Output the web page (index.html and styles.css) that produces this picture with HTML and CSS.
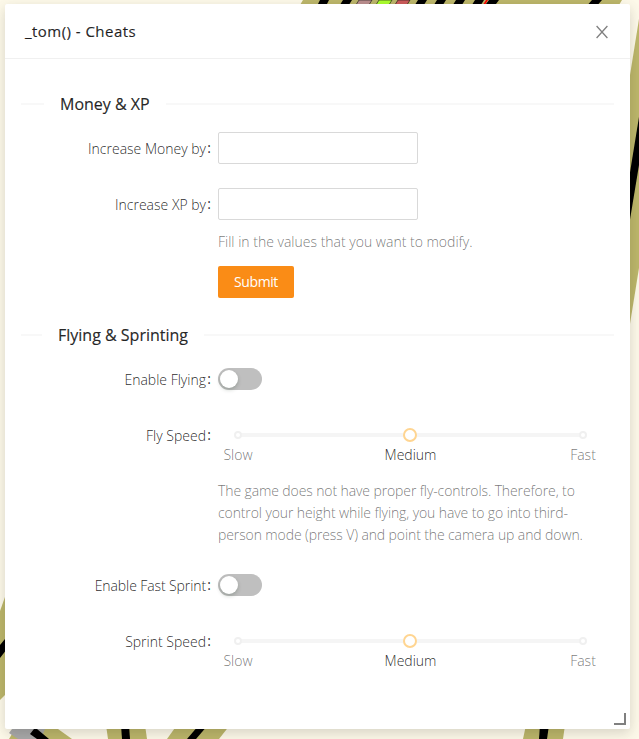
FILE: index.html
```html
<!DOCTYPE html>
<html lang="en">
<head>
<meta charset="utf-8">
<title>_tom() - Cheats</title>
<link rel="stylesheet" href="styles.css">
</head>
<body>
<svg class="scene" width="639" height="739" viewBox="0 0 639 739" aria-hidden="true">
  <g fill="#bdb76b">
    <path d="M303 0H622L610 20H291Z"/>
    <path d="M639 19L600 262V510L639 268Z"/>
    <path d="M0 611L5 597L40 590V660L0 700Z"/>
    <path d="M15 729H58L72 739H9Z"/>
    <path d="M106 725H145L147 739H108Z"/>
    <path d="M177 725H230L219 739H167Z"/>
    <path d="M526 725H565L563 739H523Z"/>
  </g>
  <g fill="#000">
    <path d="M320 0H329L325 8H316Z"/>
    <path d="M343 0H352L347 8H338Z"/>
    <path d="M418 0H427L422 8H413Z"/>
    <path d="M437 0H446L441 8H432Z"/>
    <path d="M456 0H465L460 8H451Z"/>
    <path d="M475 0H484L479 8H470Z"/>
    <path d="M489 0H499L493 8H483Z"/>
    <path d="M592 0H602L595 8H585Z"/>
    <path d="M639 117L620 234V280L639 165Z"/>
    <path d="M0 645L10 633V645L0 658Z"/>
    <path d="M121 725H129L130 739H122Z"/>
    <path d="M199 725H208L196 739H187Z"/>
    <path d="M540 725H549L547 739H539Z"/>
  </g>
  <path d="M12 729H45L41 739H18L9 733Z" fill="#a9a9a9"/>
  <path d="M34 729H37L49 739H37L30 734Z"/>
  <g stroke="#111" stroke-width=".6">
    <path d="M359 0H372L367 8H354Z" fill="#bc8f8f"/>
    <path d="M379 0H392L387 8H374Z" fill="#adff2f"/>
    <path d="M398 0H410L405 8H393Z" fill="#cd5c5c"/>
  </g>
  <path d="M486 0H488L483 8H481Z" fill="#f00"/>
</svg>

<main class="window">
  <header class="window-header">
    <h1 class="window-title">_tom() - Cheats</h1>
    <button class="close" aria-label="Close">
      <svg width="14" height="14" viewBox="0 0 14 14"><path d="M1.6 1L12.4 13M12.4 1L1.6 13"/></svg>
    </button>
  </header>
  <div class="window-body">
    <h2 class="divider money"><span>Money &amp; XP</span></h2>
    <div class="row">
      <label class="label" for="money">Increase Money by<i>:</i></label>
      <input class="input" id="money">
    </div>
    <div class="row xp">
      <label class="label" for="xp">Increase XP by<i>:</i></label>
      <div class="control">
        <input class="input" id="xp">
        <p class="hint fill">Fill in the values that you want to modify.</p>
        <button class="submit">Submit</button>
      </div>
    </div>
    <h2 class="divider flying"><span>Flying &amp; Sprinting</span></h2>
    <div class="row">
      <span class="label">Enable Flying<i>:</i></span>
      <button class="switch" role="switch" aria-checked="false" aria-label="Enable Flying"></button>
    </div>
    <div class="row fly">
      <span class="label">Fly Speed<i>:</i></span>
      <div class="control">
        <div class="slider"><span class="dot"></span><span class="handle"></span><span class="dot"></span></div>
        <div class="marks"><span>Slow</span><span class="active">Medium</span><span>Fast</span></div>
        <p class="hint">The game does not have proper fly-controls. Therefore, to<br>control your height while flying, you have to go into third-<br>person mode (press V) and point the camera up and down.</p>
      </div>
    </div>
    <div class="row">
      <span class="label tight">Enable Fast Sprint<i>:</i></span>
      <button class="switch" role="switch" aria-checked="false" aria-label="Enable Fast Sprint"></button>
    </div>
    <div class="row">
      <span class="label">Sprint Speed<i>:</i></span>
      <div class="control">
        <div class="slider"><span class="dot"></span><span class="handle"></span><span class="dot"></span></div>
        <div class="marks"><span>Slow</span><span class="active">Medium</span><span>Fast</span></div>
      </div>
    </div>
  </div>
  <span class="resize"></span>
</main>
</body>
</html>
```
FILE: styles.css
```css
* { box-sizing: border-box; }
body {
  margin: 0;
  padding: 4px 9px 10px 5px;
  height: 739px;
  overflow: hidden;
  background: #fdf9e9;
  font: 300 14px/22px "Open Sans", "Noto Sans", sans-serif;
  color: rgba(0, 0, 0, .85);
}
button { padding: 0; border: 0; font: inherit; }
h1, h2, p { margin: 0; }
.scene { position: absolute; left: 0; top: 0; }
.window {
  position: relative;
  height: 725px;
  background: #fff;
  border-radius: 2px;
  box-shadow: 0 4px 12px rgba(0, 0, 0, .12), 0 4px 24px rgba(0, 0, 0, .04);
}
.window-header {
  display: flex;
  align-items: center;
  justify-content: space-between;
  height: 55px;
  padding: 0 21px 0 20px;
  border-bottom: 1px solid #f0f0f0;
}
.window-title { font-size: 15px; font-weight: 500; letter-spacing: .46px; -webkit-text-stroke: .2px; }
.close { display: flex; margin-top: 2px; background: none; }
.close svg { fill: none; stroke: #808080; stroke-width: 1.3; }
.window-body { padding: 32px 16px 0; }
.divider {
  display: flex;
  align-items: center;
  height: 25px;
  font-size: 16px;
  font-weight: 500;
  white-space: nowrap;
  -webkit-text-stroke: .2px;
}
.divider::before, .divider::after { content: ""; height: 2px; background: #f8f8f8; }
.divider::before { width: 23px; }
.divider::after { flex: 1; }
.divider span { padding: 0 16px; }
.money { margin-bottom: 16px; }
.flying { margin-bottom: 16px; }
.flying::before { width: 21px; }
.row { display: flex; align-items: flex-start; min-height: 32px; margin-bottom: 24px; }
.label { width: 197px; padding-right: 7px; line-height: 33px; height: 32px; text-align: right; white-space: nowrap; }
.label i {
  display: inline-block;
  width: 4px;
  margin-left: 1px;
  font-style: normal;
  font-weight: 500;
  letter-spacing: 0;
  transform: translateY(-1px);
}
.tight { letter-spacing: -.1px; }
.control { flex: 1; }
.input {
  display: block;
  width: 200px;
  height: 32px;
  border: 1px solid #d9d9d9;
  border-radius: 2px;
  background: #fff;
}
.hint { color: rgba(0, 0, 0, .55); white-space: nowrap; }
.fill { margin: 11px 0 13px; }
.submit {
  display: block;
  width: 76px;
  height: 32px;
  border-radius: 2px;
  background: #fa8c16;
  color: #fff;
  font-weight: 500;
  letter-spacing: -.4px;
}
.switch { width: 44px; height: 22px; margin-top: 5px; padding: 2px; border-radius: 11px; background: #bfbfbf; }
.switch::before {
  content: "";
  display: block;
  width: 18px;
  height: 18px;
  border-radius: 50%;
  background: #fff;
  box-shadow: 0 2px 4px rgba(0, 35, 11, .2);
}
.slider {
  display: flex;
  align-items: center;
  justify-content: space-between;
  height: 14px;
  margin: 9px 27px 0 16px;
  background: linear-gradient(#f5f5f5, #f5f5f5) center / calc(100% - 8px) 4px no-repeat;
}
.dot { width: 8px; height: 8px; border: 2px solid #f0f0f0; border-radius: 50%; background: #fff; }
.handle { width: 14px; height: 14px; margin-left: -1px; border: 2px solid #ffd591; border-radius: 50%; background: #fff; }
.marks { display: grid; grid-template-columns: 60px 1fr 60px; margin: 2px 1px 0 -10px; text-align: center; color: rgba(0, 0, 0, .55); }
.marks .active { color: rgba(0, 0, 0, .85); }
.fly { margin-bottom: 23px; }
.fly .hint { margin-top: 14px; letter-spacing: -.11px; }
.resize {
  position: absolute;
  right: 4px;
  bottom: 4px;
  width: 12px;
  height: 12px;
  border: solid #808080;
  border-width: 0 2px 2px 0;
}
```
